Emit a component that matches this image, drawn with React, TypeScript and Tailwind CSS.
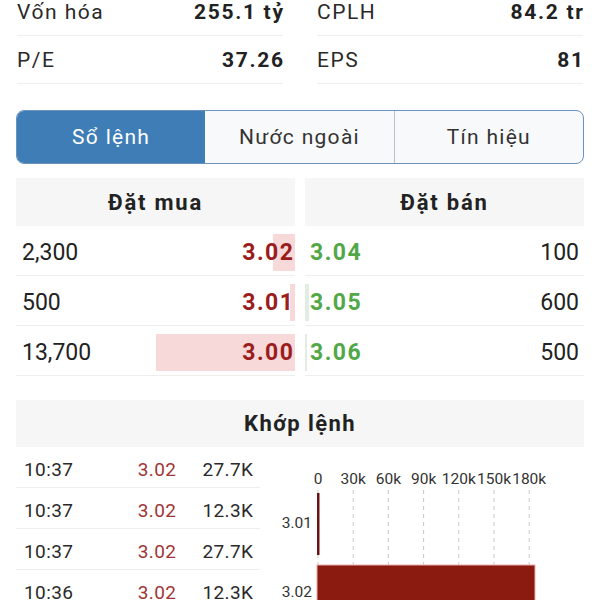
import React from "react";

const font = { fontFamily: "Roboto, 'Noto Sans', sans-serif" };

function Stat({ label, value }: { label: string; value: string }) {
  return (
    <div className="flex h-[48px] items-center justify-between border-b border-[#efefef] pt-[2px]">
      <span className="text-[21px] tracking-[1.5px] text-[#2a2a2a]">{label}</span>
      <span className="mr-[-1.7px] text-[21px] font-bold tracking-[1.7px] text-[#222]">{value}</span>
    </div>
  );
}

const buys = [
  { q: "2,300", p: "3.02", w: 22 },
  { q: "500", p: "3.01", w: 5 },
  { q: "13,700", p: "3.00", w: 139 },
];
const sells = [
  { q: "100", p: "3.04", w: 0 },
  { q: "600", p: "3.05", w: 4 },
  { q: "500", p: "3.06", w: 2 },
];
const trades = [
  { t: "10:37", p: "3.02", v: "27.7K" },
  { t: "10:37", p: "3.02", v: "12.3K" },
  { t: "10:37", p: "3.02", v: "27.7K" },
  { t: "10:36", p: "3.02", v: "12.3K" },
];

function Chart() {
  const ticks = ["0", "30k", "60k", "90k", "120k", "150k", "180k"];
  const x0 = 58;
  const step = 35.2;
  return (
    <svg width="322" height="160" className="block">
      {ticks.map((t, i) => (
        <text
          key={t}
          x={x0 + step * i}
          y={37}
          textAnchor="middle"
          fontSize="15.5"
          fill="#333"
          fontFamily="Roboto, sans-serif"
        >
          {t}
        </text>
      ))}
      {ticks.map((t, i) => (
        <line
          key={"g" + t}
          x1={x0 + step * i}
          x2={x0 + step * i}
          y1={43}
          y2={118}
          stroke="#c8c8c8"
          strokeWidth="1"
          strokeDasharray="4 4"
        />
      ))}
      <rect x={x0 - 1} y={46} width={2.5} height={62} fill="#6b1414" />
      <text x={52} y={81} textAnchor="end" fontSize="15.5" fill="#333" fontFamily="Roboto, sans-serif">
        3.01
      </text>
      <rect x={x0 - 1} y={118} width={218} height={60} fill="#8b1a10" stroke="#e9b0ac" strokeWidth="1" />
      <text x={52} y={150} textAnchor="end" fontSize="15.5" fill="#333" fontFamily="Roboto, sans-serif">
        3.02
      </text>
    </svg>
  );
}

export default function App() {
  return (
    <div className="h-[600px] w-[600px] overflow-hidden bg-white" style={font}>
      <div className="mt-[-12px] grid grid-cols-2 gap-x-[34px] px-[17px]">
        <Stat label="Vốn hóa" value="255.1 tỷ" />
        <Stat label="CPLH" value="84.2 tr" />
        <Stat label="P/E" value="37.26" />
        <Stat label="EPS" value="81" />
      </div>

      <div className="mx-[16px] mt-[26px] flex h-[54px] overflow-hidden rounded-[8px] border-[1.5px] border-[#6b93bd] bg-[#f8f9fb] pt-[2px] text-[21px] tracking-[1.3px]">
        <div className="mt-[-2px] flex flex-1 items-center justify-center bg-[#3f7db6] pt-[2px] text-white">Sổ lệnh</div>
        <div className="flex flex-1 items-center justify-center text-[#333]">Nước ngoài</div>
        <div className="mt-[-2px] flex flex-1 items-center justify-center border-l-[1.5px] border-[#b8c2cc] pt-[2px] text-[#333]">
          Tín hiệu
        </div>
      </div>

      <div className="mx-[16px] mt-[14px] flex gap-[10px]">
        <div className="flex-1">
          <div className="flex h-[48px] items-center justify-center bg-[#f6f6f6] text-[22px] font-bold tracking-[1.8px] text-[#222]">
            Đặt mua
          </div>
          {buys.map((b) => (
            <div key={b.p} className="relative flex h-[50px] items-center justify-between border-b border-[#eeeeee] pl-[6px] pr-[2px] pt-[6px]">
              <div
                className="absolute right-0 top-[8px] h-[37px] bg-[#f8d9d9]"
                style={{ width: b.w }}
              />
              <span className="relative text-[23px] text-[#222]">{b.q}</span>
              <span className="relative mr-[-1.5px] text-[23px] font-bold tracking-[1.5px] text-[#9b1c1c]">{b.p}</span>
            </div>
          ))}
        </div>
        <div className="flex-1">
          <div className="flex h-[48px] items-center justify-center bg-[#f6f6f6] text-[22px] font-bold tracking-[1.8px] text-[#222]">
            Đặt bán
          </div>
          {sells.map((s) => (
            <div key={s.p} className="relative flex h-[50px] items-center justify-between border-b border-[#eeeeee] pl-[5px] pr-[5px] pt-[6px]">
              <div
                className="absolute left-0 top-[8px] h-[37px] bg-[#e3ece3]"
                style={{ width: s.w }}
              />
              <span className="relative text-[23px] font-bold tracking-[1.5px] text-[#52a847]">{s.p}</span>
              <span className="relative text-[23px] text-[#222]">{s.q}</span>
            </div>
          ))}
        </div>
      </div>

      <div className="mx-[16px] mt-[24px]">
        <div className="flex h-[47px] items-center justify-center bg-[#f6f6f6] text-[22px] font-bold tracking-[1.4px] text-[#222]">
          Khớp lệnh
        </div>
        <div className="flex">
          <div className="w-[244px]">
            {trades.map((t, i) => (
              <div key={i} className="grid h-[41px] grid-cols-[1fr_70px_77px] items-center border-b border-[#eeeeee] pl-[8px] pr-[7px] pt-[7px] text-[19px] tracking-[0.4px]">
                <span className="text-[#2a2a2a]">{t.t}</span>
                <span className="mr-[-0.4px] text-right text-[#a13535]">{t.p}</span>
                <span className="mr-[-0.4px] text-right text-[#2a2a2a]">{t.v}</span>
              </div>
            ))}
          </div>
          <Chart />
        </div>
      </div>
    </div>
  );
}
